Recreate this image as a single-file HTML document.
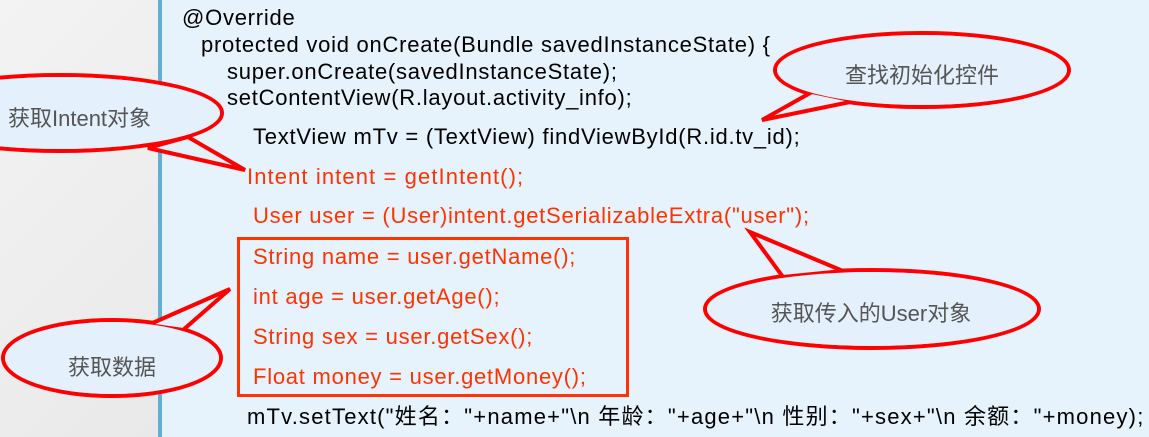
<!DOCTYPE html>
<html><head><meta charset="utf-8"><style>
body{margin:0;width:1149px;height:437px;overflow:hidden;position:relative;background:#e6f2fc;font-family:"Liberation Sans","Noto Sans CJK SC",sans-serif;}
.left{position:absolute;left:0;top:0;width:158px;height:437px;background:linear-gradient(135deg,#f3f3f3,#e9e9e9);}
.stripe{position:absolute;left:158px;top:0;width:4px;height:437px;background:#65acd8;}
.l{position:absolute;font-size:22px;line-height:24px;letter-spacing:0.75px;white-space:nowrap;color:#000;}
.r{color:#ff3300;}
.box{position:absolute;left:237px;top:237px;width:386px;height:154px;border:3px solid #ff3300;}
svg{position:absolute;left:0;top:0;}
</style></head><body>
<div class="left"></div><div class="stripe"></div>
<div class="l" style="left:182px;top:6px">@Override</div>
<div class="l" style="left:201px;top:33px">protected void onCreate(Bundle savedInstanceState) {</div>
<div class="l" style="left:227px;top:60px">super.onCreate(savedInstanceState);</div>
<div class="l" style="left:227px;top:86px">setContentView(R.layout.activity_info);</div>
<div class="l" style="left:253px;top:125px">TextView mTv = (TextView) findViewById(R.id.tv_id);</div>
<div class="l r" style="left:247px;top:165px;letter-spacing:1.1px">Intent intent = getIntent();</div>
<div class="l r" style="left:253px;top:204px">User user = (User)intent.getSerializableExtra("user");</div>
<div class="l r" style="left:253px;top:245px">String name = user.getName();</div>
<div class="l r" style="left:253px;top:285px">int age = user.getAge();</div>
<div class="l r" style="left:253px;top:325px">String sex = user.getSex();</div>
<div class="l r" style="left:253px;top:365px">Float money = user.getMoney();</div>
<div class="l" style="left:247px;top:405px;letter-spacing:1.2px">mTv.setText("姓名："+name+"\n 年龄："+age+"\n 性别："+sex+"\n 余额："+money);</div>
<div class="box"></div>
<svg width="1149" height="437" viewBox="0 0 1149 437">
<g fill="#e4f0fb" stroke="#ff0000" stroke-width="4" stroke-linejoin="miter">
<ellipse cx="922" cy="70" rx="147" ry="37"/>
<polygon points="812,92 762,120 855,101"/>
<ellipse cx="922" cy="70" rx="145" ry="35" stroke="none"/>
<ellipse cx="872" cy="309" rx="167" ry="39"/>
<polygon points="783,277 750,232 843,271"/>
<ellipse cx="872" cy="309" rx="165" ry="37" stroke="none"/>
<ellipse cx="60" cy="113" rx="162" ry="38"/>
<polygon points="188,137 245,170 148,148"/>
<ellipse cx="60" cy="113" rx="160" ry="36" stroke="none"/>
<ellipse cx="112" cy="358" rx="109" ry="38"/>
<polygon points="148,325 230,289 183,330"/>
<ellipse cx="112" cy="358" rx="107" ry="36" stroke="none"/>
</g>
<g fill="#555" font-family="Liberation Sans, Noto Sans CJK SC, sans-serif" font-size="22" text-anchor="middle">
<text x="922" y="83">查找初始化控件</text>
<text x="871" y="321">获取传入的User对象</text>
<text x="8" y="126" text-anchor="start">获取Intent对象</text>
<text x="112" y="375">获取数据</text>
</g>
</svg>
</body></html>
